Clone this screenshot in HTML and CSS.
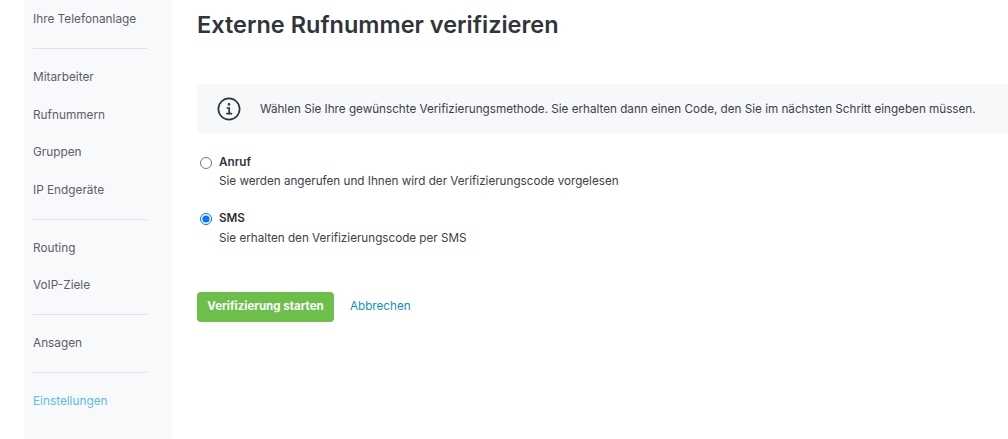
FILE: index.html
```html
<!DOCTYPE html>
<html lang="de">
<head>
    <meta charset="UTF-8">
    <meta name="viewport" content="width=device-width, initial-scale=1.0">
    <title>Externe Rufnummer verifizieren</title>
    <link rel="stylesheet" href="styles.css">
</head>
<body>
    <div class="page">
        <!-- Sidebar -->
        <nav class="sidebar">
            <a class="nav-item" href="#">Ihre Telefonanlage</a>
            <hr class="nav-divider">
            <a class="nav-item" href="#">Mitarbeiter</a>
            <a class="nav-item" href="#">Rufnummern</a>
            <a class="nav-item" href="#">Gruppen</a>
            <a class="nav-item" href="#">IP Endgeräte</a>
            <hr class="nav-divider">
            <a class="nav-item" href="#">Routing</a>
            <a class="nav-item" href="#">VoIP-Ziele</a>
            <hr class="nav-divider">
            <a class="nav-item" href="#">Ansagen</a>
            <hr class="nav-divider">
            <a class="nav-item nav-item-active" href="#">Einstellungen</a>
        </nav>

        <main class="content">
            <h1 class="title">Externe Rufnummer verifizieren</h1>

            <div class="notice">
                <svg class="notice-icon" width="24" height="24" viewBox="0 0 24 24" fill="none" stroke="#2f343b" stroke-width="1.7" stroke-linecap="round">
                    <circle cx="12" cy="12" r="10.6"/>
                    <path d="M10.3 11h1.9v5.4M10 16.6h4.4"/>
                    <circle cx="12" cy="7.4" r="0.5" fill="#2f343b"/>
                </svg>
                <p class="notice-text">Wählen Sie Ihre gewünschte Verifizierungsmethode. Sie erhalten dann einen Code, den Sie im nächsten Schritt eingeben müssen.</p>
            </div>

            <div class="options">
                <label class="option">
                    <input class="option-radio" type="radio" name="method">
                    <span class="option-body">
                        <strong class="option-name">Anruf</strong>
                        <span class="option-hint">Sie werden angerufen und Ihnen wird der Verifizierungscode vorgelesen</span>
                    </span>
                </label>
                <label class="option">
                    <input class="option-radio" type="radio" name="method" checked>
                    <span class="option-body">
                        <strong class="option-name">SMS</strong>
                        <span class="option-hint">Sie erhalten den Verifizierungscode per SMS</span>
                    </span>
                </label>
            </div>

            <div class="actions">
                <button class="btn-start" type="button">Verifizierung starten</button>
                <a class="link-cancel" href="#">Abbrechen</a>
            </div>
        </main>
    </div>
</body>
</html>
```

FILE: styles.css
```css
html, body {
    height: 100%;
    margin: 0;
    overflow: hidden;
    background: #fff;
}
body {
    font-family: Inter, "Noto Sans", sans-serif;
    font-size: 11.68px;
    color: #3c4249;
}
.page {
    display: flex;
    height: 100%;
    padding-left: 24px;
}
.sidebar {
    flex: 0 0 148px;
    box-sizing: border-box;
    padding: 0.25px 25px 0 9px;
    background: #f8f9fb;
}
.nav-item {
    display: flex;
    align-items: center;
    height: 37.5px;
    color: #5b6066;
    font-size: 11.8px;
    text-decoration: none;
}
.nav-item-active {
    color: #5bbce8;
}
.nav-divider {
    height: 1px;
    margin: 10.5px 0 9px;
    border: 0;
    background: #dfe1e6;
}
.content {
    flex: 1;
    min-width: 0;
    padding-left: 25px;
}
.title {
    margin: 10px 0 45px;
    color: #30353c;
    font-size: 23.5px;
    line-height: 29px;
    font-weight: 600;
}
.notice {
    display: flex;
    align-items: center;
    gap: 19px;
    height: 50px;
    margin-right: -10px;
    padding-left: 20px;
    border-radius: 4px;
    background: #f7f8fa;
}
.notice-icon {
    flex: none;
}
.notice-text {
    margin: 0;
    white-space: nowrap;
}
.options {
    display: flex;
    flex-direction: column;
    gap: 20px;
    margin-top: 19.5px;
}
.option {
    display: flex;
    align-items: flex-start;
    gap: 7px;
}
.option-radio {
    flex: none;
    width: 12px;
    height: 12px;
    margin: 3px 0 0 3px;
}
.option-body {
    display: flex;
    flex-direction: column;
    gap: 2.5px;
    line-height: 17px;
}
.option-name {
    color: #30353c;
    font-weight: 600;
}
.actions {
    display: flex;
    align-items: center;
    gap: 16px;
    margin-top: 45.5px;
}
.btn-start {
    box-sizing: border-box;
    width: 137px;
    height: 30px;
    padding: 0 0 2px;
    border: 0;
    border-radius: 4px;
    background: #6cc04a;
    color: #fff;
    font-family: inherit;
    font-size: 11.5px;
    font-weight: 700;
}
.link-cancel {
    margin-bottom: 2px;
    color: #1490c8;
    text-decoration: none;
}
```
